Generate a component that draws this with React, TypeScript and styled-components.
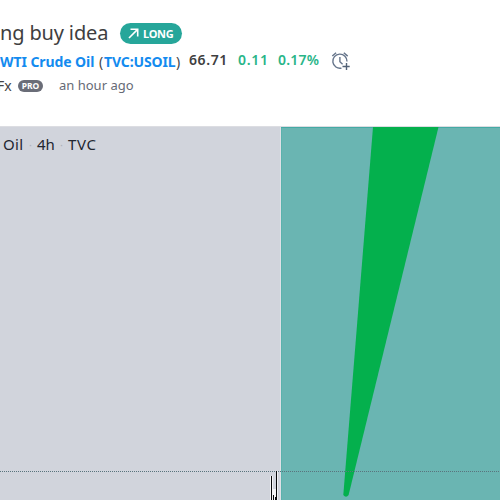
import React from "react";
import styled, { createGlobalStyle } from "styled-components";

const GlobalStyle = createGlobalStyle`
  body { margin: 0; background: #fff; overflow: hidden; }
  * { box-sizing: border-box; }
`;

const Page = styled.main`
  width: 500px;
  height: 500px;
  overflow: hidden;
  display: flex;
  flex-direction: column;
  font-family: "Trebuchet MS", "Noto Sans", sans-serif;
  white-space: nowrap;
`;

const Header = styled.header`
  height: 127px;
  flex: none;
  padding-top: 19px;
  border-bottom: 1px solid #dcdde2;
`;

const Row = styled.div<{ $height: number }>`
  display: flex;
  align-items: center;
  height: ${(p) => p.$height}px;
`;

const Label = styled.span<{
  $width: number;
  $size: number;
  $color: string;
  $weight?: number;
  $spacing?: number;
  $gap?: number;
  $drop?: number;
}>`
  flex: none;
  width: ${(p) => p.$width}px;
  margin-right: ${(p) => p.$gap ?? 0}px;
  padding-top: ${(p) => Math.max(0, p.$drop ?? 0)}px;
  padding-bottom: ${(p) => Math.max(0, -(p.$drop ?? 0))}px;
  font-size: ${(p) => p.$size}px;
  font-weight: ${(p) => p.$weight ?? 400};
  letter-spacing: ${(p) => p.$spacing ?? 0}px;
  color: ${(p) => p.$color};
  line-height: 1;
`;

const AuthorName = styled(Label)`
  margin-left: -3px;
`;

const LongBadge = styled.span`
  display: flex;
  align-items: center;
  gap: 4px;
  width: 62px;
  height: 21px;
  padding-left: 8px;
  border-radius: 11px;
  background: #26a69a;
  color: #fff;
  font-size: 11px;
  font-weight: 700;
  letter-spacing: -0.3px;
  line-height: 1;
`;

const ProBadge = styled.span`
  display: flex;
  align-items: center;
  justify-content: center;
  width: 25px;
  height: 12px;
  margin-right: 16px;
  border-radius: 6px;
  background: #6a6d78;
  color: #fff;
  font-size: 8.5px;
  font-weight: 700;
  line-height: 1;
`;

const Chart = styled.section`
  position: relative;
  flex: 1;
  background: #d1d4dc;
`;

const Drawing = styled.svg`
  display: block;
`;

const Legend = styled.div`
  position: absolute;
  left: 3px;
  top: 10px;
  display: flex;
  align-items: center;
`;

export default function App() {
  return (
    <Page>
      <GlobalStyle />
      <Header>
        <Row $height={29}>
          <Label $width={108} $gap={12} $size={20} $drop={-1} $color="#3e3e40" $spacing={-0.15}>ng buy idea</Label>
          <LongBadge>
            <svg width="11" height="11" viewBox="0 0 11 11" fill="none" stroke="#fff" strokeWidth="1.6">
              <path d="M1 10 9.6 1.4M2.5 1.3H9.7V8.5" />
            </svg>
            LONG
          </LongBadge>
        </Row>
        <Row $height={26}>
          <Label $width={99} $size={14} $weight={700} $drop={1} $color="#138bef" $spacing={-0.08}>WTI Crude Oil</Label>
          <Label $width={5} $size={14} $drop={1} $color="#444">(</Label>
          <Label $width={72} $size={14} $weight={700} $drop={1} $color="#138bef" $spacing={-0.12}>TVC:USOIL</Label>
          <Label $width={5} $gap={8} $size={14} $drop={1} $color="#444">)</Label>
          <Label $width={39} $gap={10} $size={14} $weight={600} $drop={-3} $color="#3e3e40" $spacing={0.6}>66.71</Label>
          <Label $width={31} $gap={9} $size={14} $weight={600} $drop={-3} $color="#29b588" $spacing={0.7}>0.11</Label>
          <Label $width={42} $gap={11} $size={14} $weight={600} $drop={-3} $color="#29b588" $spacing={0.2}>0.17%</Label>
          <svg width="20" height="20" viewBox="0 0 20 20" fill="none" stroke="#66758b" strokeWidth="1.4">
            <path d="M10.5 17.1A7.1 7.1 0 1 1 16 10.5M8.9 6v4.8l2.7 2.5M1.3 5.1 5.1 1.7M12.8 1.7l3.9 3.4" />
            <path d="M11.5 15.5h7.2M15.5 12v7" stroke="#526176" />
          </svg>
        </Row>
        <Row $height={24}>
          <AuthorName $width={15} $gap={6} $size={14} $drop={-1} $color="#444">Fx</AuthorName>
          <ProBadge>PRO</ProBadge>
          <Label $width={76} $size={13} $drop={-1} $color="#666a76">an hour ago</Label>
        </Row>
      </Header>
      <Chart>
        <Drawing width="500" height="373" viewBox="0 127 500 373">
          <rect x="281" y="127" width="219" height="373" fill="#6ab5b2" />
          <path d="M281 127.5H500" stroke="#45aaa5" />
          <path d="M280.5 127V500" stroke="#dfe0e6" />
          <path d="M281.5 128V500" stroke="#5bb2ad" />
          <path d="M373 127H438.5L348.6 495Q346 498.5 343.3 495Z" fill="#04b04d" />
          <path d="M0 471.5H500" stroke="#59747d" strokeDasharray="1 1" />
          <rect x="270" y="476" width="3" height="24" fill="#f4f4f6" />
          <rect x="273" y="489" width="4" height="11" fill="#f4f4f6" />
          <path d="M277.5 471V500" stroke="#f1f1f3" />
          <path d="M271.5 476V500M273.5 495V500M275.5 497V500M276.5 471V500" stroke="#08090b" />
        </Drawing>
        <Legend>
          <Label $width={21} $gap={5} $size={15} $color="#222630" $spacing={0.3}>Oil</Label>
          <Label $width={3} $gap={5} $size={11} $color="#aeb1b9">·</Label>
          <Label $width={19} $gap={4} $size={15} $color="#222630">4h</Label>
          <Label $width={3} $gap={5} $size={11} $color="#aeb1b9">·</Label>
          <Label $width={29} $size={15} $color="#222630" $spacing={0.6}>TVC</Label>
        </Legend>
      </Chart>
    </Page>
  );
}
